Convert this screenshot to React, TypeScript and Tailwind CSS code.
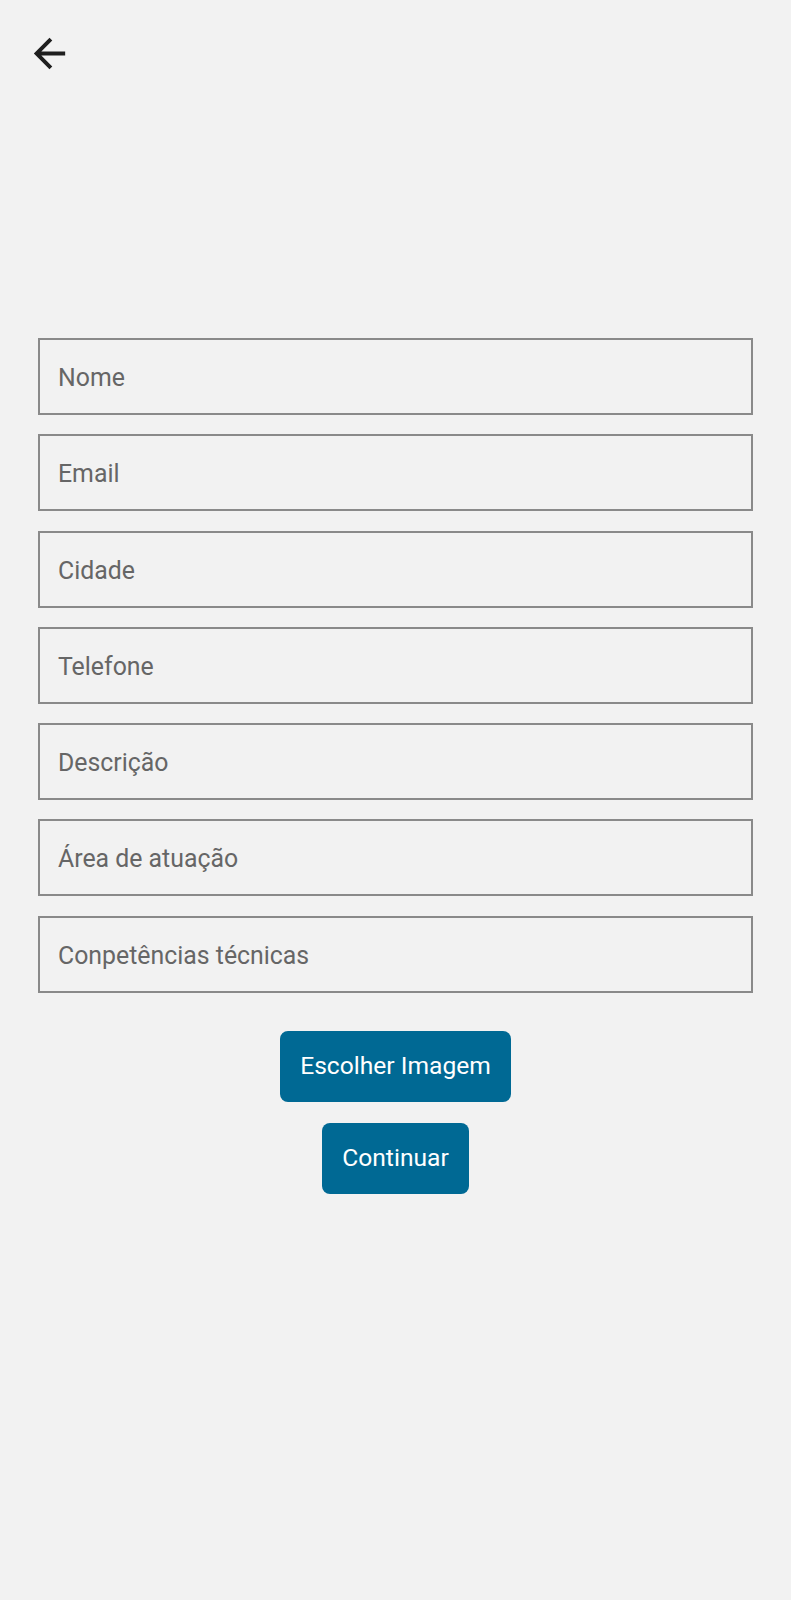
const fields = [
  "Nome",
  "Email",
  "Cidade",
  "Telefone",
  "Descrição",
  "Área de atuação",
  "Conpetências técnicas",
];

const App = () => {
  return (
    <div className="min-h-[1600px] w-full bg-[#f2f2f2] font-['Roboto',sans-serif]">
      <header className="h-[338px] pl-[26px] pt-[30px]">
        <button className="w-[47px] h-[47px] flex items-center justify-center text-[#1f1f1f]">
          <svg viewBox="0 0 24 24" className="w-[47px] h-[47px]" fill="currentColor">
            <path d="M20 11H7.83l5.59-5.59L12 4l-8 8 8 8 1.41-1.41L7.83 13H20v-2z" />
          </svg>
        </button>
      </header>

      <form className="mx-[38px] flex flex-col gap-[19.3px]">
        {fields.map((f) => (
          <input
            key={f}
            placeholder={f}
            className="h-[77px] w-full border-2 border-[#8a8a8a] bg-transparent px-[18px] pt-[2px] text-[24.85px] text-[#333] placeholder:text-[#666] outline-none"
          />
        ))}
      </form>

      <div className="mt-[38px] flex flex-col items-center gap-[21px]">
        <button className="h-[71px] px-[20px] rounded-[8px] bg-[#006994] text-white text-[24.6px]">
          Escolher Imagem
        </button>
        <button className="h-[71px] px-[20px] rounded-[8px] bg-[#006994] text-white text-[24.6px]">
          Continuar
        </button>
      </div>
    </div>
  );
};

export default App;
